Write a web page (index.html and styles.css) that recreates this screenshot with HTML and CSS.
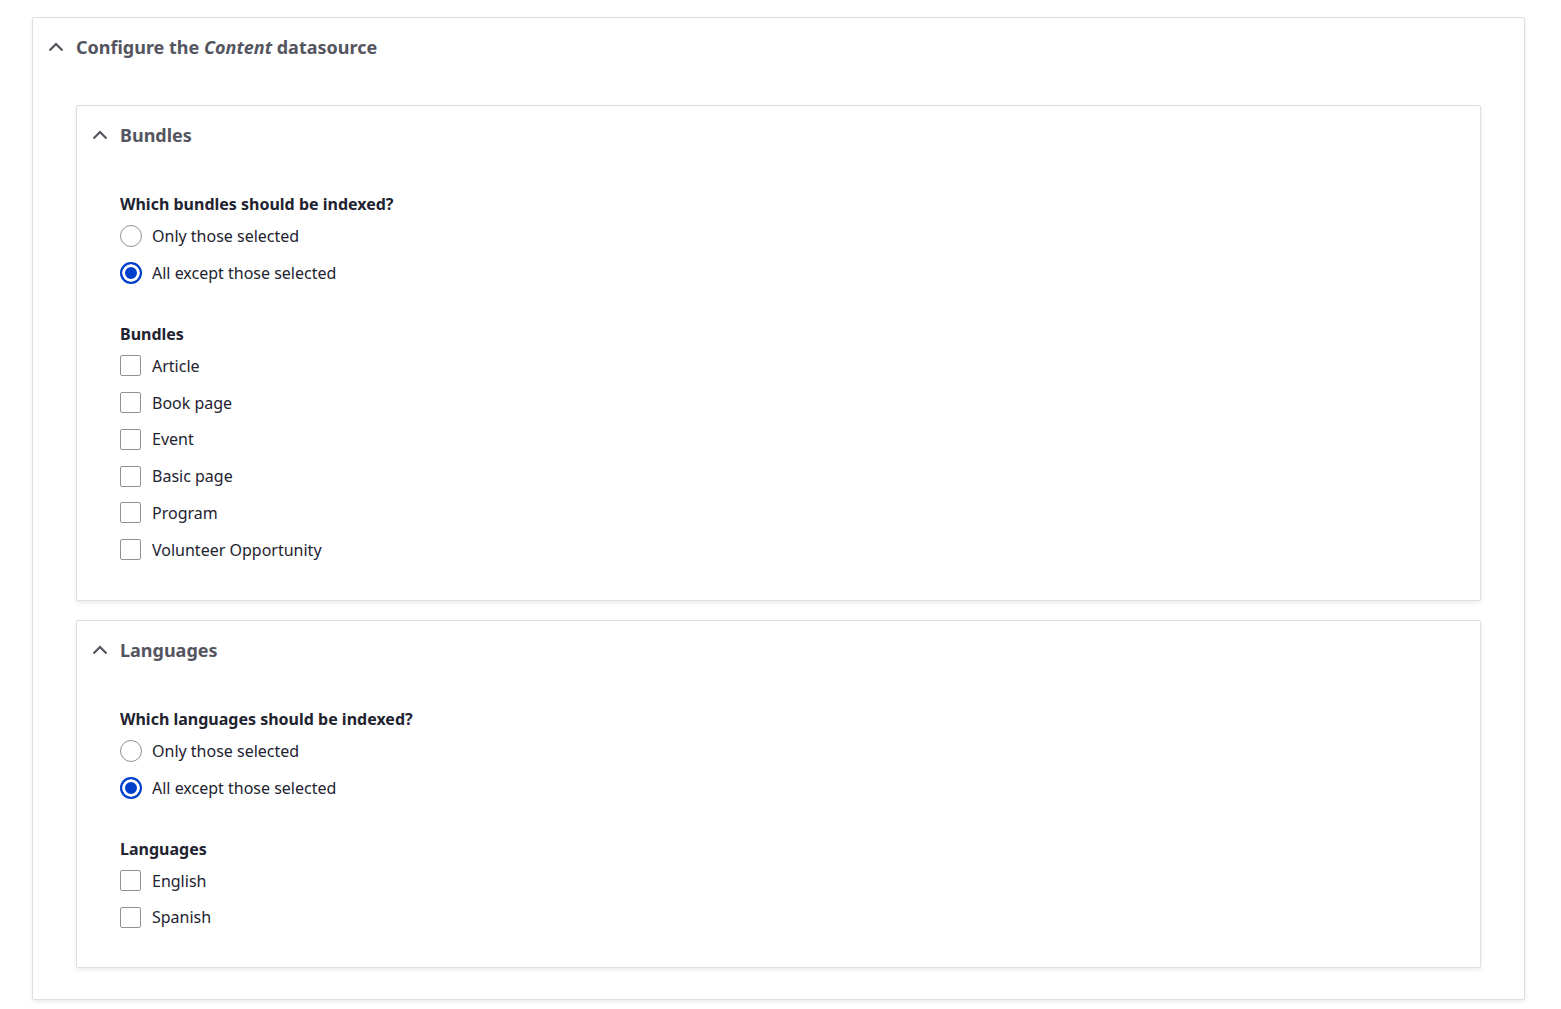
FILE: index.html
```html
<!DOCTYPE html>
<html lang="en">
<head>
    <meta charset="UTF-8">
    <meta name="viewport" content="width=device-width, initial-scale=1.0">
    <title>Configure the Content datasource</title>
    <link rel="stylesheet" href="styles.css">
</head>
<body>
    <details class="panel panel-outer" open>
        <summary class="panel-summary">
            <svg class="chevron" width="16" height="10" viewBox="0 0 16 10"><path d="M1.5 8.5 8 2l6.5 6.5" fill="none" stroke="currentColor" stroke-width="2.2"/></svg>
            <span>Configure the <em>Content</em> datasource</span>
        </summary>
        <div class="panel-body">

            <details class="panel" open>
                <summary class="panel-summary">
                    <svg class="chevron" width="16" height="10" viewBox="0 0 16 10"><path d="M1.5 8.5 8 2l6.5 6.5" fill="none" stroke="currentColor" stroke-width="2.2"/></svg>
                    <span>Bundles</span>
                </summary>
                <div class="panel-body">
                    <div class="form-group">
                        <div class="form-label">Which bundles should be indexed?</div>
                        <div class="options">
                            <label class="option"><input type="radio" name="bundles_mode"> <span>Only those selected</span></label>
                            <label class="option"><input type="radio" name="bundles_mode" checked> <span>All except those selected</span></label>
                        </div>
                    </div>
                    <div class="form-group">
                        <div class="form-label">Bundles</div>
                        <div class="options">
                            <label class="option"><input type="checkbox"> <span>Article</span></label>
                            <label class="option"><input type="checkbox"> <span>Book page</span></label>
                            <label class="option"><input type="checkbox"> <span>Event</span></label>
                            <label class="option"><input type="checkbox"> <span>Basic page</span></label>
                            <label class="option"><input type="checkbox"> <span>Program</span></label>
                            <label class="option"><input type="checkbox"> <span>Volunteer Opportunity</span></label>
                        </div>
                    </div>
                </div>
            </details>

            <details class="panel" open>
                <summary class="panel-summary">
                    <svg class="chevron" width="16" height="10" viewBox="0 0 16 10"><path d="M1.5 8.5 8 2l6.5 6.5" fill="none" stroke="currentColor" stroke-width="2.2"/></svg>
                    <span>Languages</span>
                </summary>
                <div class="panel-body">
                    <div class="form-group">
                        <div class="form-label">Which languages should be indexed?</div>
                        <div class="options">
                            <label class="option"><input type="radio" name="languages_mode"> <span>Only those selected</span></label>
                            <label class="option"><input type="radio" name="languages_mode" checked> <span>All except those selected</span></label>
                        </div>
                    </div>
                    <div class="form-group">
                        <div class="form-label">Languages</div>
                        <div class="options">
                            <label class="option"><input type="checkbox"> <span>English</span></label>
                            <label class="option"><input type="checkbox"> <span>Spanish</span></label>
                        </div>
                    </div>
                </div>
            </details>

        </div>
    </details>
</body>
</html>
```

FILE: styles.css
```css
html, body {
    margin: 0;
    padding: 0;
    background: #fff;
}

body {
    padding: 17px 36px 10px 32px;
    font-family: "Noto Sans", "Open Sans", sans-serif;
    font-size: 16px;
    color: #222330;
}

.panel {
    border: 1px solid #dedfe4;
    border-radius: 2px;
    background: #fff;
    box-shadow: 0 2px 4px rgba(0, 0, 0, 0.08);
}

.panel + .panel {
    margin-top: 19px;
}

.panel-summary {
    display: flex;
    align-items: center;
    height: 58px;
    padding: 0 16px;
    list-style: none;
    cursor: pointer;
    font-size: 18px;
    font-weight: 700;
    color: #545560;
}

.panel-outer > .panel-summary {
    height: 57px;
    padding-bottom: 2px;
}

.panel-summary::-webkit-details-marker {
    display: none;
}

.chevron {
    flex: none;
    margin: 0 12px 0 -1px;
    color: #545560;
}

.panel-body {
    padding: 30px 43px 38px 43px;
}

.panel-outer > .panel-body {
    padding: 28px 43px 31px 43px;
}

.form-group + .form-group {
    margin-top: 39px;
}

.form-label {
    line-height: 20px;
    font-weight: 700;
    color: #222330;
}

.options {
    display: flex;
    flex-direction: column;
    gap: 12.8px;
    margin-top: 10px;
}

.option {
    display: flex;
    align-items: center;
    height: 24px;
    line-height: 24px;
    color: #222330;
    cursor: pointer;
}

.option input {
    appearance: none;
    -webkit-appearance: none;
    flex: none;
    margin: 0 10px 0 0;
    background: #fff;
}

.option input[type="radio"] {
    width: 22px;
    height: 22px;
    border: 1px solid #919297;
    border-radius: 50%;
}

.option input[type="radio"]:checked {
    border: 2px solid #003ecc;
    background: #003ecc;
    box-shadow: inset 0 0 0 3px #fff;
}

.option input[type="checkbox"] {
    width: 21px;
    height: 21px;
    margin-right: 11px;
    border: 1px solid #919297;
    border-radius: 2px;
}
```
